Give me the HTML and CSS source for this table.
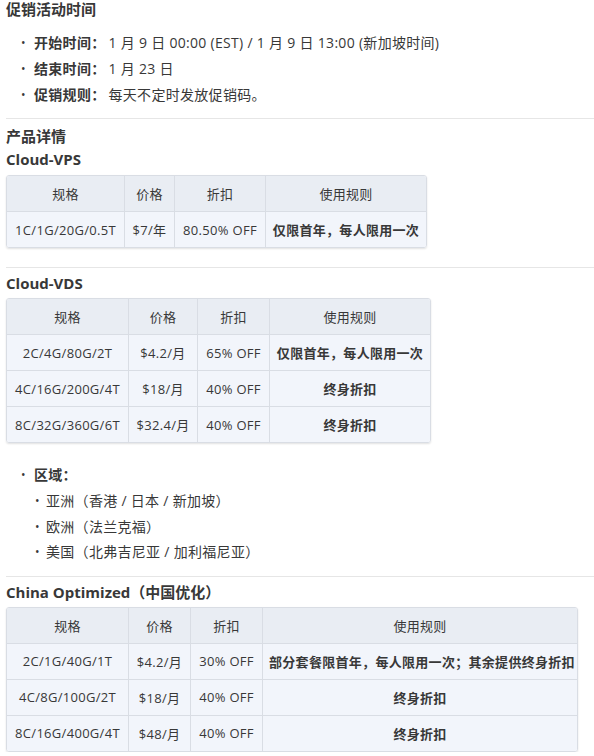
FILE: index.html
```html
<!DOCTYPE html>
<html lang="zh">
<head>
<meta charset="utf-8">
<link rel="stylesheet" href="styles.css">
</head>
<body>
<div class="page">
  <h3 class="title first">促销活动时间</h3>
  <ul class="list">
    <li><b>开始时间：</b>1 月 9 日 00:00 (EST) / 1 月 9 日 13:00 (新加坡时间)</li>
    <li><b>结束时间：</b>1 月 23 日</li>
    <li><b>促销规则：</b>每天不定时发放促销码。</li>
  </ul>
  <hr class="sep">
  <h3 class="title">产品详情</h3>
  <h4 class="sub">Cloud-VPS</h4>
  <table class="tbl t-vps">
    <colgroup><col class="c1"><col class="c2"><col class="c3"><col class="c4"></colgroup>
    <thead><tr><th>规格</th><th>价格</th><th>折扣</th><th>使用规则</th></tr></thead>
    <tbody>
      <tr><td>1C/1G/20G/0.5T</td><td>$7/年</td><td>80.50% OFF</td><td><b>仅限首年，每人限用一次</b></td></tr>
    </tbody>
  </table>
  <hr class="sep sep2">
  <h4 class="sub">Cloud-VDS</h4>
  <table class="tbl t-vds">
    <colgroup><col class="c1"><col class="c2"><col class="c3"><col class="c4"></colgroup>
    <thead><tr><th>规格</th><th>价格</th><th>折扣</th><th>使用规则</th></tr></thead>
    <tbody>
      <tr><td>2C/4G/80G/2T</td><td>$4.2/月</td><td>65% OFF</td><td><b>仅限首年，每人限用一次</b></td></tr>
      <tr><td>4C/16G/200G/4T</td><td>$18/月</td><td>40% OFF</td><td><b>终身折扣</b></td></tr>
      <tr><td>8C/32G/360G/6T</td><td>$32.4/月</td><td>40% OFF</td><td><b>终身折扣</b></td></tr>
    </tbody>
  </table>
  <ul class="list region">
    <li><b>区域：</b>
      <ul class="inner">
        <li>亚洲（香港 / 日本 / 新加坡）</li>
        <li>欧洲（法兰克福）</li>
        <li>美国（北弗吉尼亚 / 加利福尼亚）</li>
      </ul>
    </li>
  </ul>
  <hr class="sep sep3">
  <h4 class="sub">China Optimized（中国优化）</h4>
  <table class="tbl t-cn">
    <colgroup><col class="c1"><col class="c2"><col class="c3"><col class="c4"></colgroup>
    <thead><tr><th>规格</th><th>价格</th><th>折扣</th><th>使用规则</th></tr></thead>
    <tbody>
      <tr><td>2C/1G/40G/1T</td><td>$4.2/月</td><td>30% OFF</td><td><b>部分套餐限首年，每人限用一次；其余提供终身折扣</b></td></tr>
      <tr><td>4C/8G/100G/2T</td><td>$18/月</td><td>40% OFF</td><td><b>终身折扣</b></td></tr>
      <tr><td>8C/16G/400G/4T</td><td>$48/月</td><td>40% OFF</td><td><b>终身折扣</b></td></tr>
    </tbody>
  </table>
</div>
</body>
</html>
```

FILE: styles.css
```css
html, body {
  margin: 0;
  padding: 0;
  background: #fff;
}
body {
  font-family: "Open Sans", "Noto Sans CJK SC", sans-serif;
  font-size: 14px;
  letter-spacing: 0.3px;
  color: #383838;
}
.page {
  padding: 0 0 0 6px;
}
.title, .sub {
  margin: 0;
  font-size: 15px;
  font-weight: 700;
  line-height: 20px;
  color: #383838;
  letter-spacing: 0;
}
.title.first {
  line-height: 18px;
  margin-top: 0;
}
.title {
  margin-top: 7px;
}
.sub {
  margin-top: 3px;
  margin-bottom: 6px;
}
.list {
  list-style: none;
  margin: 12px 0 0 0;
  padding: 0;
}
.list > li {
  position: relative;
  line-height: 26px;
  padding-left: 28px;
}
.list li::before {
  content: "•";
  position: absolute;
  left: 15px;
  top: 0;
  font-size: 12px;
}
.list b {
  font-weight: 700;
  margin-right: 3px;
}
.inner {
  list-style: none;
  margin: 0;
  padding: 0;
}
.inner > li {
  position: relative;
  line-height: 25.5px;
  padding-left: 12px;
}
.inner > li::before {
  left: 1px;
}
.region {
  margin-top: 19px;
}
.sep {
  border: 0;
  border-top: 1px solid #e6e6e6;
  margin: 10px 0 0 0;
  height: 0;
}
.sep2 { margin-top: 19px; }
.sep3 { margin-top: 11px; }
.sep2 + .sub, .sep3 + .sub {
  margin-top: 5px;
  margin-bottom: 5px;
}
.tbl {
  border-collapse: separate;
  border-spacing: 0;
  border: 1px solid #d9dde4;
  border-radius: 3px;
  box-shadow: 0 1px 2px rgba(0,0,0,0.12);
  overflow: hidden;
  font-size: 13px;
  table-layout: fixed;
}
.tbl th, .tbl td {
  padding: 0 6px;
  height: 35px;
  text-align: center;
  white-space: nowrap;
  border-right: 1px solid #d9dde4;
  border-top: 1px solid #d9dde4;
  font-weight: 400;
}
.tbl th:last-child, .tbl td:last-child { border-right: 0; }
.tbl thead th {
  border-top: 0;
  background: #e9edf3;
}
.tbl td {
  background: #f2f5fb;
}
.tbl td b { font-weight: 700; }

.t-vps { width: 421px; }
.t-vps .c1 { width: 118px; }
.t-vps .c2 { width: 50px; }
.t-vps .c3 { width: 91px; }
.t-vps .c4 { width: 160px; }

.t-vds { width: 425px; }
.t-vds .c1 { width: 122px; }
.t-vds .c2 { width: 69px; }
.t-vds .c3 { width: 72px; }
.t-vds .c4 { width: 160px; }

.t-cn { width: 572px; }
.t-cn .c1 { width: 122px; }
.t-cn .c2 { width: 62px; }
.t-cn .c3 { width: 72px; }
.t-cn .c4 { width: 314px; }
```
